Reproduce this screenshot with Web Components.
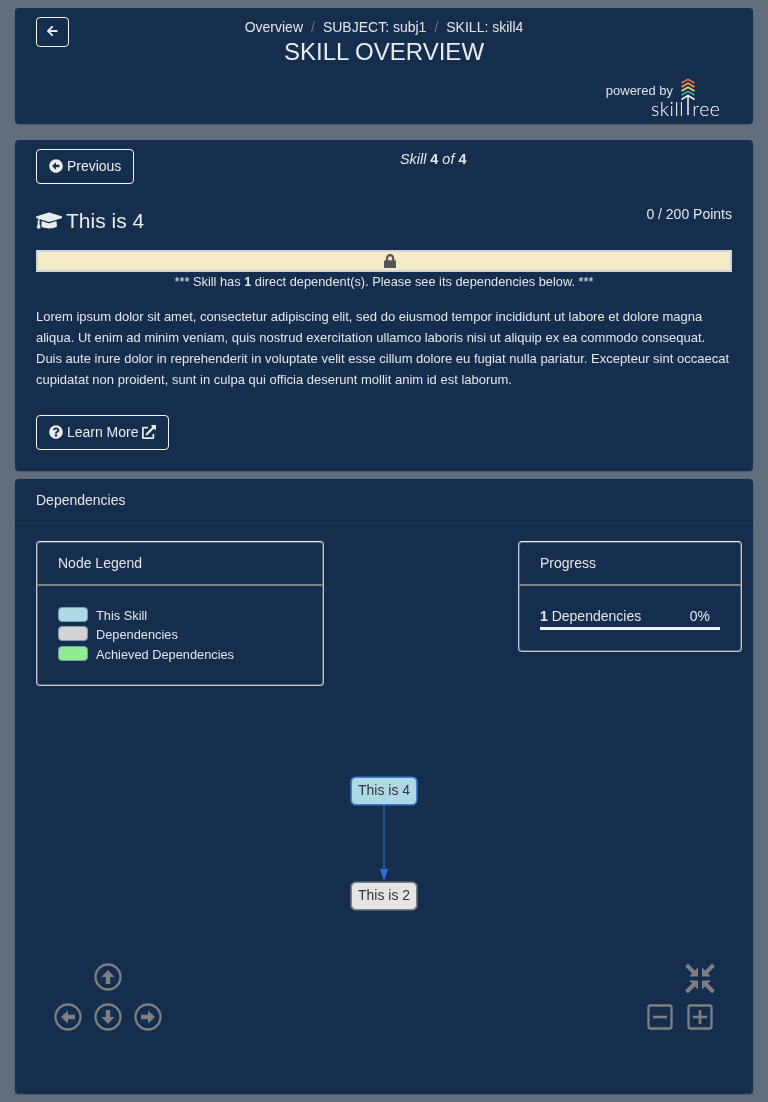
<!DOCTYPE html>
<html>
<head>
<meta charset="utf-8">
<title>Skill Overview</title>
<style>
    html, body { margin: 0; padding: 0; }
    body {
        background: #626d7d;
        color: #e2e6ea;
        font-family: "Liberation Sans", Arial, sans-serif;
        font-size: 14px;
        line-height: 21px;
        padding: 8px 15px;
    }
</style>
</head>
<body>
<skill-page></skill-page>

<script>
const ICONS = {
    arrowLeft: ['0 0 448 512', 'M257.5 445.1l-22.2 22.2c-9.4 9.4-24.6 9.4-33.9 0L7 273c-9.4-9.4-9.4-24.6 0-33.9L201.4 44.7c9.4-9.4 24.6-9.4 33.9 0l22.2 22.2c9.5 9.5 9.3 25-.4 34.3L136.6 216H424c13.3 0 24 10.7 24 24v32c0 13.3-10.7 24-24 24H136.6l120.5 114.8c9.8 9.3 10 24.8.4 34.3z'],
    circleLeft: ['0 0 512 512', 'M256 504C119 504 8 393 8 256S119 8 256 8s248 111 248 248-111 248-248 248zm116-292H256v-70.9c0-10.7-13-16.1-20.5-8.5L121.2 247.5c-4.7 4.7-4.7 12.2 0 16.9l114.3 114.9c7.6 7.6 20.5 2.2 20.5-8.5V300h116c6.6 0 12-5.4 12-12v-64c0-6.6-5.4-12-12-12z'],
    question: ['0 0 512 512', 'M504 256c0 136.997-111.043 248-248 248S8 392.997 8 256C8 119.083 119.043 8 256 8s248 111.083 248 248zM262.655 90c-54.497 0-89.255 22.957-116.549 63.758-3.536 5.286-2.353 12.415 2.715 16.258l34.699 26.31c5.205 3.947 12.621 3.008 16.665-2.122 17.864-22.658 30.113-35.797 57.303-35.797 20.429 0 45.698 13.148 45.698 32.958 0 14.976-12.363 22.667-32.534 33.976C247.128 238.528 216 254.941 216 296v4c0 6.627 5.373 12 12 12h56c6.627 0 12-5.373 12-12v-1.333c0-28.462 83.186-29.647 83.186-106.667 0-58.002-60.165-102-116.531-102zM256 338c-25.365 0-46 20.635-46 46 0 25.364 20.635 46 46 46s46-20.636 46-46c0-25.365-20.635-46-46-46z'],
    external: ['0 0 512 512', 'M432,320H400a16,16,0,0,0-16,16V448H64V128H208a16,16,0,0,0,16-16V80a16,16,0,0,0-16-16H48A48,48,0,0,0,0,112V464a48,48,0,0,0,48,48H400a48,48,0,0,0,48-48V336A16,16,0,0,0,432,320ZM488,0h-128c-21.37,0-32.05,25.91-17,41l35.73,35.73L135,320.37a24,24,0,0,0,0,34L157.67,377a24,24,0,0,0,34,0L435.28,133.32,471,169c15,15,41,4.5,41-17V24A24,24,0,0,0,488,0Z'],
    cap: ['0 0 640 512', 'M622.34 153.2L343.4 67.5c-15.2-4.67-31.6-4.67-46.79 0L17.66 153.2c-23.54 7.23-23.54 38.36 0 45.59l48.63 14.94c-10.67 13.19-17.23 29.28-17.88 46.9C38.78 266.15 32 276.11 32 288c0 10.78 5.68 19.85 13.86 25.65L20.33 428.53C18.11 438.52 25.71 448 35.94 448h56.11c10.24 0 17.84-9.48 15.62-19.47L82.14 313.65C90.32 307.85 96 298.78 96 288c0-11.57-6.47-21.25-15.66-26.87.76-15.02 8.44-28.3 20.69-36.72L296.6 284.5c9.06 2.78 26.44 6.25 46.79 0l278.95-85.7c23.55-7.24 23.55-38.36 0-45.6zM352.79 315.09c-28.53 8.76-52.84 3.92-65.59 0l-145.02-44.55L128 384c0 35.35 85.96 64 192 64s192-28.65 192-64l-14.18-113.47-145.03 44.56z'],
    lock: ['0 0 448 512', 'M400 224h-24v-72C376 68.2 307.8 0 224 0S72 68.2 72 152v72H48c-26.5 0-48 21.5-48 48v192c0 26.5 21.5 48 48 48h352c26.5 0 48-21.5 48-48V272c0-26.5-21.5-48-48-48zm-104 0H152v-72c0-39.7 32.3-72 72-72s72 32.3 72 72v72z']
};

function icon(name, size) {
    const [box, d] = ICONS[name];
    const w = box.split(' ')[2] / 512 * size;
    return `<svg width="${w}" height="${size}" viewBox="${box}" style="vertical-align:-0.125em"><path fill="currentColor" d="${d}"/></svg>`;
}

class SkCard extends HTMLElement {
    constructor() {
        super();
        this.attachShadow({ mode: 'open' }).innerHTML = `
            <style>
                :host {
                    display: block;
                    background: #152e4d;
                    border-radius: 4px;
                    box-sizing: border-box;
                    box-shadow: 0 1px 1px rgba(0, 0, 0, 0.2);
                }
            </style>
            <slot></slot>
        `;
    }
}

class SkButton extends HTMLElement {
    constructor() {
        super();
        this.attachShadow({ mode: 'open' }).innerHTML = `
            <style>
                :host {
                    display: inline-flex;
                    align-items: center;
                    box-sizing: border-box;
                    height: 35px;
                    padding: 0 12px;
                    border: 1px solid #f1f3f5;
                    border-radius: 4px;
                    color: #e9ecef;
                    font-size: 14px;
                    flex: none;
                }
                span { display: block; white-space: pre; line-height: 21px; }
            </style>
            <span><slot></slot></span>
        `;
    }
}

class SkillHeader extends HTMLElement {
    constructor() {
        super();
        this.attachShadow({ mode: 'open' }).innerHTML = `
            <style>
                :host { display: block; }
                .top {
                    display: grid;
                    grid-template-columns: 1fr auto 1fr;
                    padding: 9px 21px 0;
                }
                sk-button { height: 30px; width: 33px; padding: 0 0 2px; justify-content: center; justify-self: start; }
                .center { text-align: center; }
                .crumbs { height: 21px; line-height: 21px; }
                .crumbs i { font-style: normal; color: #6c757d; padding: 0 8px; }
                h1 { margin: 0; font-size: 24px; font-weight: 400; line-height: 27px; color: #e9ecef; padding-bottom: 2px; }
                .powered {
                    display: flex;
                    justify-content: flex-end;
                    align-items: flex-start;
                    padding: 11px 33px 0 0;
                }
                .by { font-size: 13px; line-height: 20px; padding-top: 3px; color: #dee2e6; margin-right: -22px; }
            </style>
            <div class="top">
                <sk-button>${icon('arrowLeft', 12)}</sk-button>
                <div class="center">
                    <div class="crumbs">Overview<i>/</i>SUBJECT: subj1<i>/</i>SKILL: skill4</div>
                    <h1>SKILL OVERVIEW</h1>
                </div>
                <div></div>
            </div>
            <div class="powered">
                <span class="by">powered by</span>
                <skilltree-logo></skilltree-logo>
            </div>
        `;
    }
}

class SkilltreeLogo extends HTMLElement {
    constructor() {
        super();
        this.attachShadow({ mode: 'open' }).innerHTML = `
            <style>
                :host { display: block; position: relative; width: 69px; height: 38px; }
                svg { position: absolute; left: 30px; top: 0; }
                span {
                    position: absolute;
                    top: 21px;
                    font-family: Lato, "Liberation Sans", sans-serif;
                    font-size: 19.5px;
                    line-height: 20px;
                    font-weight: 300;
                    color: #fff;
                }
                .a { left: 0; letter-spacing: 0.5px; }
                .b { right: -0.5px; letter-spacing: 0.5px; }
            </style>
            <svg width="14" height="38" viewBox="0 0 14 38" fill="none" stroke-width="1.8">
                <path d="M.5 5 7 1.2 13.5 5" stroke="#dd6a4d"/>
                <path d="M.5 9 7 5.2 13.5 9" stroke="#e69a55"/>
                <path d="M.5 13 7 9.2 13.5 13" stroke="#e8cc68"/>
                <path d="M.5 17 7 13.2 13.5 17" stroke="#3aa08c"/>
                <path d="M.5 21.5 7 17.5 13.5 21.5 M7 18V37" stroke="#f1f3f5" stroke-width="1.5"/>
            </svg>
            <span class="a">skill</span><span class="b">ree</span>
        `;
    }
}

class SkillDetail extends HTMLElement {
    constructor() {
        super();
        this.attachShadow({ mode: 'open' }).innerHTML = `
            <style>
                :host { display: block; padding: 9px 21px 21px; }
                .nav { display: flex; align-items: flex-start; }
                .count { flex: 1; text-align: center; font-style: italic; font-size: 14.4px; }
                .count b { font-style: normal; font-weight: 700; }
                .title { display: flex; justify-content: space-between; margin-top: 19px; height: 47px; }
                h2 { margin: 0; font-size: 21px; font-weight: 400; line-height: 36px; color: #e9ecef; }
                h2 svg { margin-right: 3.75px; vertical-align: -1px; }
                .points { line-height: 21px; padding-top: 1px; }
                .bar {
                    height: 22px;
                    box-sizing: border-box;
                    border: 2px solid #ced4da;
                    background: #f5ebc6;
                    color: #555;
                    display: flex;
                    justify-content: center;
                    align-items: center;
                    padding-left: 12px;
                }
                .note { text-align: center; font-size: 12.8px; line-height: 20px; }
                .desc { margin: 14px 0 25px; font-size: 13px; line-height: 21px; }
            </style>
            <div class="nav">
                <sk-button>${icon('circleLeft', 14)} Previous</sk-button>
                <div class="count">Skill <b>4</b> of <b>4</b></div>
            </div>
            <div class="title">
                <h2>${icon('cap', 21)}This is 4</h2>
                <div class="points">0 / 200 Points</div>
            </div>
            <div class="bar">${icon('lock', 14)}</div>
            <div class="note">*** Skill has <b>1</b> direct dependent(s). Please see its dependencies below. ***</div>
            <p class="desc">Lorem ipsum dolor sit amet, consectetur adipiscing elit, sed do eiusmod tempor incididunt ut labore et dolore magna aliqua. Ut enim ad minim veniam, quis nostrud exercitation ullamco laboris nisi ut aliquip ex ea commodo consequat. Duis aute irure dolor in reprehenderit in voluptate velit esse cillum dolore eu fugiat nulla pariatur. Excepteur sint occaecat cupidatat non proident, sunt in culpa qui officia deserunt mollit anim id est laborum.</p>
            <sk-button>${icon('question', 14)} Learn More ${icon('external', 14)}</sk-button>
        `;
    }
}

class InfoPanel extends HTMLElement {
    constructor() {
        super();
        this.attachShadow({ mode: 'open' }).innerHTML = `
            <style>
                :host {
                    display: block;
                    box-sizing: border-box;
                    border: 1px solid #c4c8cd;
                    border-top-color: #e9ecef;
                    border-radius: 4px;
                    box-shadow: inset 0 0 0 1px rgba(128, 128, 128, 0.7);
                    position: relative;
                    z-index: 1;
                }
                .head {
                    height: 44px;
                    box-sizing: border-box;
                    padding: 11px 21px;
                    border-bottom: 2px solid #808080;
                    line-height: 21px;
                }
                .body { padding: 19px 21px; }
            </style>
            <div class="head"></div>
            <div class="body"><slot></slot></div>
        `;
        this.shadowRoot.querySelector('.head').textContent = this.getAttribute('heading');
    }
}

class NodeLegend extends HTMLElement {
    constructor() {
        super();
        const rows = [['#add8e6', 'This Skill'], ['#d3d3d3', 'Dependencies'], ['#90ee90', 'Achieved Dependencies']];
        this.attachShadow({ mode: 'open' }).innerHTML = `
            <style>
                :host { display: block; font-size: 12.8px; padding-top: 1.5px; }
                .row { display: flex; gap: 8px; height: 19.5px; line-height: 19.5px; }
                .row span:last-child { margin-top: -1px; }
                .swatch {
                    width: 30px;
                    height: 15px;
                    box-sizing: border-box;
                    border: 1px solid #7f9aa8;
                    border-radius: 4px;
                }
            </style>
            ${rows.map(([c, t]) => `<div class="row"><span class="swatch" style="background:${c}"></span><span>${t}</span></div>`).join('')}
        `;
    }
}

class DepProgress extends HTMLElement {
    constructor() {
        super();
        this.attachShadow({ mode: 'open' }).innerHTML = `
            <style>
                :host { display: block; width: 180px; padding-top: 1px; }
                .row { display: flex; justify-content: space-between; padding-right: 10px; line-height: 21px; }
                .track { height: 3px; background: #f1f3f5; }
            </style>
            <div class="row"><span><b>1</b> Dependencies</span><span>0%</span></div>
            <div class="track"></div>
        `;
    }
}

class GraphNode extends HTMLElement {
    constructor() {
        super();
        this.attachShadow({ mode: 'open' }).innerHTML = `
            <style>
                :host {
                    position: absolute;
                    box-sizing: border-box;
                    width: 66px;
                    height: 28px;
                    border-radius: 5px;
                    border: 1px solid var(--edge);
                    box-shadow: 0 0 0 0.6px var(--edge);
                    background: var(--fill);
                    color: #343434;
                    font-size: 14px;
                    line-height: 25px;
                    text-align: center;
                }
            </style>
            <slot></slot>
        `;
    }
}

class NavControls extends HTMLElement {
    constructor() {
        super();
        const round = (cx, cy, rot) => `<g transform="translate(${cx} ${cy}) rotate(${rot})">
            <circle r="12.5" fill="none" stroke="#7d7f82" stroke-width="2.3"/>
            <path d="M0 -7 6.5 0H2.2V7H-2.2V0H-6.5Z" fill="#7d7f82"/>
        </g>`;
        const box = (cx, cy, plus) => `<g transform="translate(${cx} ${cy})">
            <rect x="-11.5" y="-11.5" width="23" height="23" rx="2" fill="none" stroke="#7d7f82" stroke-width="2.3"/>
            <path d="M-7 0H7${plus ? 'M0 -7V7' : ''}" stroke="#7d7f82" stroke-width="2.6"/>
        </g>`;
        const shrink = (rot) => `<path transform="translate(700 978.5) rotate(${rot})" d="M-2 -2V-11L-5.1 -7.9 -12.1 -14.9 -14.9 -12.1 -7.9 -5.1 -11 -2Z" fill="#7d7f82"/>`;
        this.attachShadow({ mode: 'open' }).innerHTML = `
            <style>
                :host { position: absolute; left: 0; top: 0; }
                svg { display: block; position: absolute; left: 0; top: 0; }
            </style>
            <svg width="738" height="615" viewBox="15 479 738 615">
                ${round(108, 977, 0)}${round(68, 1017, -90)}${round(108, 1017, 180)}${round(148, 1017, 90)}
                ${box(660, 1017, false)}${box(700, 1017, true)}
                ${shrink(0)}${shrink(90)}${shrink(180)}${shrink(270)}
                <path d="M384 805V870" stroke="#24549a" stroke-width="2"/>
                <path d="M384 881 380 869H388Z" fill="#2b6fd8"/>
            </svg>
        `;
    }
}

class DependencyGraph extends HTMLElement {
    constructor() {
        super();
        this.attachShadow({ mode: 'open' }).innerHTML = `
            <style>
                :host { display: block; position: relative; height: 615px; }
                .head {
                    height: 42px;
                    box-sizing: border-box;
                    padding: 11px 21px;
                    line-height: 21px;
                    border-bottom: 1px solid #11273f;
                }
                .panels {
                    display: flex;
                    justify-content: space-between;
                    align-items: flex-start;
                    padding: 20px 11px 0 21px;
                }
                .legend { width: 288px; height: 145px; }
                .progress { width: 224px; height: 111px; }
                .this { left: 336px; top: 298px; --fill: #add8e6; --edge: #3f7fd0; }
                .dep { left: 336px; top: 403px; --fill: #e5e5e5; --edge: #7a7f87; }
            </style>
            <div class="head">Dependencies</div>
            <div class="panels">
                <info-panel class="legend" heading="Node Legend"><node-legend></node-legend></info-panel>
                <info-panel class="progress" heading="Progress"><dep-progress></dep-progress></info-panel>
            </div>
            <nav-controls></nav-controls>
            <graph-node class="this">This is 4</graph-node>
            <graph-node class="dep">This is 2</graph-node>
        `;
    }
}

class SkillPage extends HTMLElement {
    constructor() {
        super();
        this.attachShadow({ mode: 'open' }).innerHTML = `
            <style>
                :host { display: flex; flex-direction: column; will-change: transform; }
                .c1 { height: 116px; margin-bottom: 16px; }
                .c2 { height: 331px; margin-bottom: 8px; }
                .c3 { height: 615px; }
            </style>
            <sk-card class="c1"><skill-header></skill-header></sk-card>
            <sk-card class="c2"><skill-detail></skill-detail></sk-card>
            <sk-card class="c3"><dependency-graph></dependency-graph></sk-card>
        `;
    }
}

customElements.define('sk-card', SkCard);
customElements.define('sk-button', SkButton);
customElements.define('skilltree-logo', SkilltreeLogo);
customElements.define('skill-header', SkillHeader);
customElements.define('skill-detail', SkillDetail);
customElements.define('info-panel', InfoPanel);
customElements.define('node-legend', NodeLegend);
customElements.define('dep-progress', DepProgress);
customElements.define('graph-node', GraphNode);
customElements.define('nav-controls', NavControls);
customElements.define('dependency-graph', DependencyGraph);
customElements.define('skill-page', SkillPage);
</script>
</body>
</html>
